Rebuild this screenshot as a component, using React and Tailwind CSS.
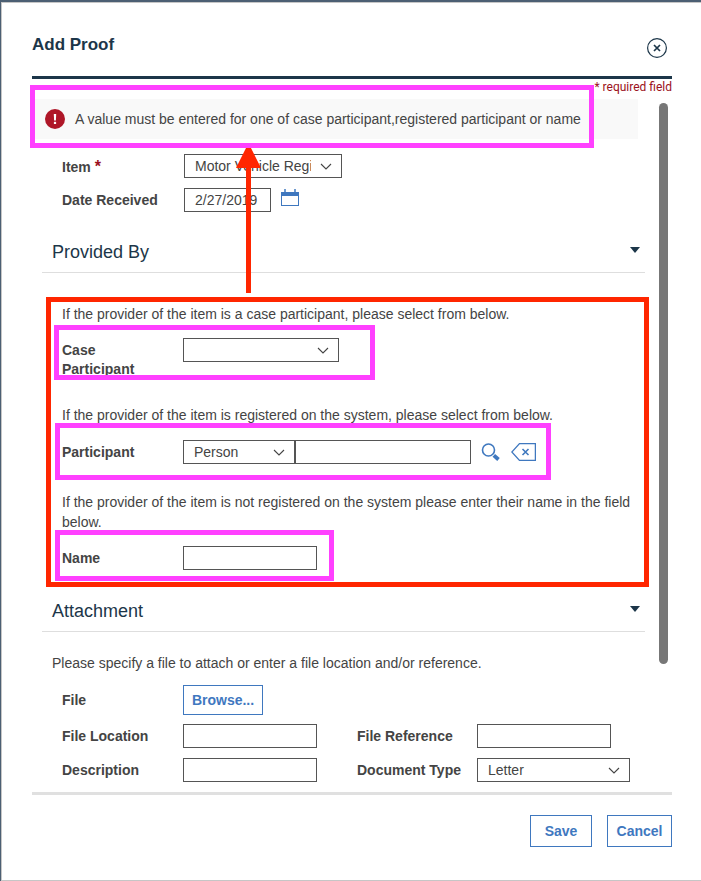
import React from "react";

const FIELD =
  "h-6 rounded-none border border-[#555] bg-white px-[10px] text-sm text-[#444]";

function Select({ id, label, width, options, className = "" }) {
  return (
    <div className={`relative ${width} ${className}`}>
      <select
        id={id}
        aria-label={label}
        className="block h-6 w-full appearance-none rounded-none border border-[#555] bg-white pr-[30px] pl-[10px] text-sm text-[#444]"
      >
        {options.map((option) => (
          <option key={option}>{option}</option>
        ))}
      </select>
      <svg
        className="pointer-events-none absolute top-[9px] right-[10px]"
        width="12"
        height="7"
        viewBox="0 0 12 7"
        fill="none"
        stroke="#444"
        strokeWidth="1.1"
      >
        <path d="M1 1l5 5 5-5" />
      </svg>
    </div>
  );
}

function Label({ htmlFor, children }) {
  return (
    <label htmlFor={htmlFor} className="pt-[3px] text-sm leading-[19px] font-bold">
      {children}
    </label>
  );
}

function SectionHeader({ title }) {
  return (
    <h2 className="ml-[10px] border-b border-[#dedede] text-lg text-[#1c3649]">
      <button
        type="button"
        aria-expanded="true"
        className="flex h-10 w-full items-center justify-between pr-[5px] pl-[10px]"
      >
        {title}
        <svg width="10" height="6" viewBox="0 0 10 6" className="mb-1" fill="#1c3649">
          <path d="M0 0h10L5 6z" />
        </svg>
      </button>
    </h2>
  );
}

function Highlight({ className }) {
  return (
    <div
      aria-hidden="true"
      className={`pointer-events-none absolute z-20 border-5 border-[#ff40ff] ${className}`}
    />
  );
}

export default function App() {
  return (
    <div className="min-h-screen bg-[#4c5f73] pt-[2px] pl-px font-['Liberation_Sans',Arial,sans-serif] text-sm text-[#444]">
      <form
        role="dialog"
        aria-labelledby="dialog-title"
        onSubmit={(e) => e.preventDefault()}
        className="border-y border-l border-[#c6c6c6] bg-white pr-[29px] pb-[33px] pl-[30px]"
      >
        <header className="flex h-19 items-start justify-between border-b-3 border-[#1c3649] pt-[30px]">
          <h1 id="dialog-title" className="text-[17px] leading-6 font-bold text-[#1c3649]">
            Add Proof
          </h1>
          <button type="button" aria-label="Close" className="mt-[5px] mr-[5px]">
            <svg width="20" height="20" viewBox="0 0 20 20" fill="none" stroke="#1c3649">
              <circle cx="10" cy="10" r="9.4" strokeWidth="1.2" />
              <path d="M7 7l6 6M13 7l-6 6" strokeWidth="1.7" />
            </svg>
          </button>
        </header>

        <p className="h-5 text-right font-[Roboto,sans-serif] text-xs leading-4 text-[#9b1020]">
          * required field
        </p>

        <div className="flex border-b-3 border-[#e0e0e0] pb-[10px]">
          <div className="min-w-0 flex-1">
            <div
              role="alert"
              className="relative mr-[7px] flex h-10 items-center gap-[10px] bg-[#f9f9f9] pl-[13px]"
            >
              <svg width="20" height="20" viewBox="0 0 20 20">
                <circle cx="10" cy="10" r="10" fill="#af1728" />
                <path d="M8.8 5h2.4l-.3 6.5H9.1z" fill="#fff" />
                <rect x="8.9" y="12.8" width="2.2" height="2.2" fill="#fff" />
              </svg>
              <span>
                A value must be entered for one of case participant,registered participant or name
              </span>
              <Highlight className="-top-[14px] right-[44px] -bottom-[9px] -left-[2px]" />
            </div>

            <div className="mt-[15px] grid grid-cols-[122px_1fr] gap-y-[10px] pl-[30px]">
              <Label htmlFor="item">
                Item <span className="text-base leading-[19px] text-[#9b1020]">*</span>
              </Label>
              <Select
                id="item"
                width="w-[158px]"
                options={["Motor Vehicle Registration"]}
              />
              <Label htmlFor="date">Date Received</Label>
              <div className="flex items-start gap-[10px]">
                <input
                  id="date"
                  type="text"
                  defaultValue="2/27/2019"
                  className={`${FIELD} w-[87px]`}
                />
                <button type="button" aria-label="Pick a date">
                  <svg width="18" height="18" viewBox="0 0 18 18" fill="#3f78bf">
                    <path d="M3 1h2v3H3zM13 1h2v3h-2z" opacity=".75" />
                    <path d="M0 4h18v14H0zM1 8v9h16V8z" fillRule="evenodd" />
                  </svg>
                </button>
              </div>
            </div>

            <div className="mt-5">
              <SectionHeader title="Provided By" />
            </div>

            <div className="relative mt-[31px]">
              <p className="pl-[30px] leading-5">
                If the provider of the item is a case participant, please select from below.
              </p>
              <div className="relative mt-[14px] grid h-[43px] grid-cols-[121px_1fr] pl-[30px]">
                <Label htmlFor="case-participant">
                  Case
                  <br />
                  Participant
                </Label>
                <Select id="case-participant" width="w-[156px]" options={[""]} />
                <Highlight className="-top-[13px] bottom-px left-[22px] w-[321px]" />
              </div>

              <p className="mt-6 pl-[30px] leading-5">
                If the provider of the item is registered on the system, please select from below.
              </p>
              <div className="relative mt-[15px] grid grid-cols-[121px_1fr] pl-[30px]">
                <Label htmlFor="participant">Participant</Label>
                <div className="flex items-center">
                  <Select
                    label="Participant type"
                    width="w-[112px]"
                    options={["Person"]}
                  />
                  <input
                    id="participant"
                    type="text"
                    className={`${FIELD} w-[176px]`}
                  />
                  <button type="button" aria-label="Search" className="ml-[10px]">
                    <svg width="19" height="18" viewBox="0 0 19 18" fill="none" stroke="#3f78bf">
                      <circle cx="7.5" cy="7" r="6" strokeWidth="1.6" />
                      <path d="M12.8 12.3l4.7 4.2" strokeWidth="3.8" />
                    </svg>
                  </button>
                  <button type="button" aria-label="Clear" className="ml-[11px]">
                    <svg width="25" height="18" viewBox="0 0 25 18" fill="none" stroke="#3f78bf">
                      <path d="M8.5.6h15.9v16.8H8.5L.8 9z" strokeWidth="1.3" />
                      <path d="M11.5 6l6 6M17.5 6l-6 6" strokeWidth="1.6" />
                    </svg>
                  </button>
                </div>
                <Highlight className="-top-[17px] -bottom-4 left-[23px] w-[496px]" />
              </div>

              <p className="mt-7 pl-[30px] leading-5">
                If the provider of the item is not registered on the system please enter their name in the field
                below.
              </p>
              <div className="relative mt-[14px] grid grid-cols-[121px_1fr] pl-[30px]">
                <Label htmlFor="name">Name</Label>
                <input id="name" type="text" className={`${FIELD} w-[134px]`} />
                <Highlight className="-top-4 -bottom-[11px] left-[23px] w-[279px]" />
              </div>

              <div
                aria-hidden="true"
                className="pointer-events-none absolute -top-[7px] -right-1 -bottom-[17px] left-[14px] z-10 border-5 border-[#ff2600]"
              />
              <svg
                aria-hidden="true"
                className="pointer-events-none absolute bottom-full left-[204px] z-10 mb-[11px]"
                width="25"
                height="150"
                viewBox="0 0 25 150"
                fill="#ff2600"
              >
                <path d="M12.5 0L25 25H15v125h-5V25H0z" />
              </svg>
            </div>

            <div className="mt-[21px]">
              <SectionHeader title="Attachment" />
            </div>

            <p className="mt-[21px] pl-5 leading-5">
              Please specify a file to attach or enter a file location and/or reference.
            </p>
            <div className="mt-3 grid grid-cols-[121px_1fr] pl-[30px]">
              <div className="flex items-center pb-[3px]">
                <Label htmlFor="file">File</Label>
              </div>
              <button
                id="file"
                type="button"
                className="h-[30px] w-20 border border-[#3f78bf] font-bold text-[#3f78bf]"
              >
                Browse...
              </button>
            </div>
            <div className="mt-[9px] grid grid-cols-[121px_174px_120px_1fr] gap-y-[10px] pl-[30px]">
              <Label htmlFor="location">File Location</Label>
              <input id="location" type="text" className={`${FIELD} w-[134px]`} />
              <Label htmlFor="reference">File Reference</Label>
              <input id="reference" type="text" className={`${FIELD} w-[134px]`} />
              <Label htmlFor="description">Description</Label>
              <input id="description" type="text" className={`${FIELD} w-[134px]`} />
              <Label htmlFor="doc-type">Document Type</Label>
              <Select id="doc-type" width="w-[153px]" options={["Letter"]} />
            </div>
          </div>

          <div className="mt-1 mr-1 mb-[118px] ml-[14px] w-[9px] shrink-0 rounded-full bg-[#777]" />
        </div>

        <footer className="flex justify-end gap-[15px] pt-5">
          <button
            type="submit"
            className="h-8 w-[62px] border border-[#3f78bf] font-bold text-[#3f78bf]"
          >
            Save
          </button>
          <button
            type="button"
            className="h-8 w-[65px] border border-[#3f78bf] font-bold text-[#3f78bf]"
          >
            Cancel
          </button>
        </footer>
      </form>
    </div>
  );
}
